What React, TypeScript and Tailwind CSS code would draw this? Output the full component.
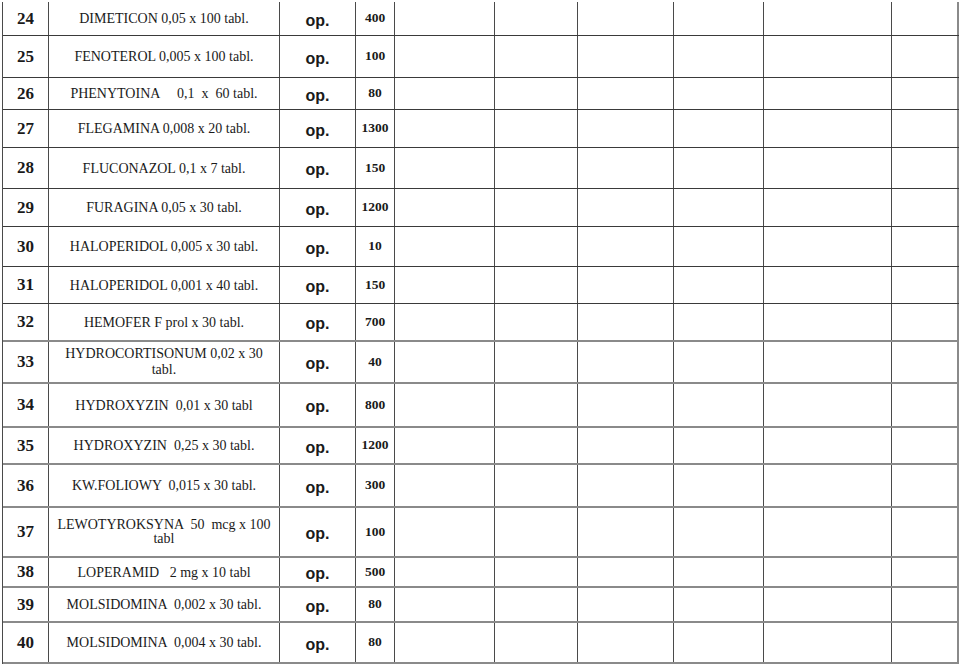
import React from "react";

type Row = {
  no: string;
  name: React.ReactNode;
  qty: string;
  h: string;
  lower?: boolean;
};

const rows: Row[] = [
  { no: "24", name: "DIMETICON 0,05 x 100 tabl.", qty: "400", h: "h-[34px]" },
  { no: "25", name: "FENOTEROL 0,005 x 100 tabl.", qty: "100", h: "h-[42px]" },
  { no: "26", name: "PHENYTOINA     0,1  x  60 tabl.", qty: "80", h: "h-[32px]" },
  { no: "27", name: "FLEGAMINA 0,008 x 20 tabl.", qty: "1300", h: "h-[38px]" },
  { no: "28", name: "FLUCONAZOL 0,1 x 7 tabl.", qty: "150", h: "h-[41px]" },
  { no: "29", name: "FURAGINA 0,05 x 30 tabl.", qty: "1200", h: "h-[38px]" },
  { no: "30", name: "HALOPERIDOL 0,005 x 30 tabl.", qty: "10", h: "h-[40px]" },
  { no: "31", name: "HALOPERIDOL 0,001 x 40 tabl.", qty: "150", h: "h-[37px]" },
  { no: "32", name: "HEMOFER F prol x 30 tabl.", qty: "700", h: "h-[38px]", lower: true },
  {
    no: "33",
    name: (
      <span className="block leading-[16px]">
        HYDROCORTISONUM 0,02 x 30
        <br />
        tabl.
      </span>
    ),
    qty: "40",
    h: "h-[42px]",
    lower: true,
  },
  { no: "34", name: "HYDROXYZIN  0,01 x 30 tabl", qty: "800", h: "h-[44px]", lower: true },
  { no: "35", name: "HYDROXYZIN  0,25 x 30 tabl.", qty: "1200", h: "h-[37px]", lower: true },
  { no: "36", name: "KW.FOLIOWY  0,015 x 30 tabl.", qty: "300", h: "h-[43px]", lower: true },
  {
    no: "37",
    name: (
      <span className="block leading-[14px]">
        LEWOTYROKSYNA  50  mcg x 100
        <br />
        tabl
      </span>
    ),
    qty: "100",
    h: "h-[50px]",
    lower: true,
  },
  { no: "38", name: "LOPERAMID   2 mg x 10 tabl", qty: "500", h: "h-[30px]", lower: true },
  { no: "39", name: "MOLSIDOMINA  0,002 x 30 tabl.", qty: "80", h: "h-[35px]", lower: true },
  { no: "40", name: "MOLSIDOMINA  0,004 x 30 tabl.", qty: "80", h: "h-[41px]", lower: true },
];

const cell = "flex items-center justify-center border-r border-[#4a4a4a] h-full";

export default function App() {
  return (
    <div className="w-[960px] h-[666px] bg-white overflow-hidden text-[#1a1a1a] font-['Liberation_Serif','Times_New_Roman',serif]">
      <div className="ml-[2px] mt-[2px] w-[957px] border-l border-[#4a4a4a]">
        {rows.map((r) => (
          <div
            key={r.no}
            className={`flex ${r.h} ${
              r.lower ? "border-b-2 border-[#8a8a8a]" : "border-b border-[#3a3a3a]"
            }`}
          >
            <div className={`${cell} w-[46px] text-[17px] font-bold`}>{r.no}</div>
            <div className={`${cell} w-[231px] text-[14px] text-center whitespace-pre px-1`}>
              {r.name}
            </div>
            <div
              className={`${cell} w-[76px] pt-[4px] text-[16px] font-bold font-['Liberation_Sans',Arial,sans-serif]`}
            >
              op.
            </div>
            <div className={`${cell} w-[39px] text-[13.5px] font-bold`}>{r.qty}</div>
            <div className={`${cell} w-[100px]`} />
            <div className={`${cell} w-[83px]`} />
            <div className={`${cell} w-[96px]`} />
            <div className={`${cell} w-[90px]`} />
            <div className={`${cell} w-[128px]`} />
            <div className={`${cell} w-[67px] border-r-2 border-r-[#8a8a8a]`} />
          </div>
        ))}
      </div>
    </div>
  );
}
